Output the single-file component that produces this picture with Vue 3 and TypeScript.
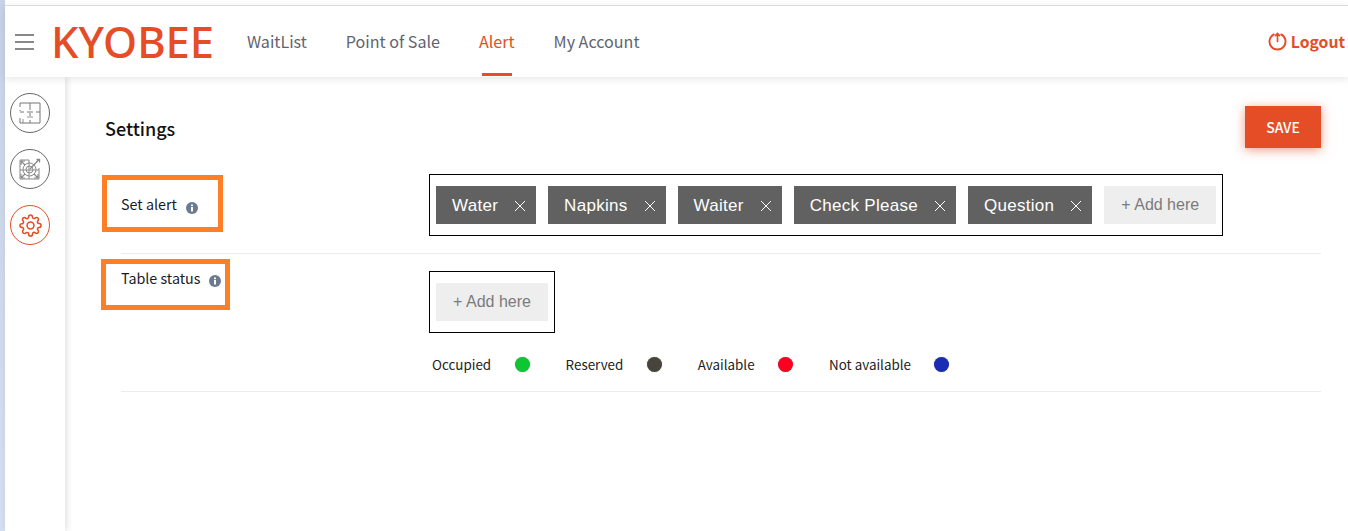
<script setup lang="ts">
const navItems = [
  { label: 'WaitList', active: false },
  { label: 'Point of Sale', active: false },
  { label: 'Alert', active: true },
  { label: 'My Account', active: false },
]
const alerts = ['Water', 'Napkins', 'Waiter', 'Check Please', 'Question']
const legend = [
  { label: 'Occupied', color: '#0cc733' },
  { label: 'Reserved', color: '#45453b' },
  { label: 'Available', color: '#fa0021' },
  { label: 'Not available', color: '#1a2cb4' },
]
</script>

<template>
  <div class="page">
    <div class="stripe"></div>
    <div class="main">
      <header class="header">
        <button class="burger" aria-label="Menu"><i></i><i></i><i></i></button>
        <div class="logo">KYOBEE</div>
        <nav class="nav">
          <a v-for="item in navItems" :key="item.label" :class="{ active: item.active }">{{ item.label }}</a>
        </nav>
        <a class="logout">
          <svg width="19" height="19" viewBox="0 0 19 19" fill="none" stroke="#e44d26" stroke-width="1.9" stroke-linecap="round">
            <path d="M5.800 2.400a8 8 0 1 0 7.400 0" />
            <path d="M9.500 9.500V1.500M7.500 3.600l2-2.200 2 2.200" stroke-width="1.700" />
          </svg>
          Logout
        </a>
      </header>
      <div class="body">
        <aside class="sidebar">
          <div class="round">
            <svg width="22" height="22" viewBox="0 0 22 22" fill="none" stroke="#777" stroke-width="1">
              <path d="M1 5V1h20v20H1v-5M1 9V8M11 1v7M11 11v3M11 18v3M1 10h4M8 10h6M17 10h4" />
              <path d="M4 21V17M8 15h6" stroke-width=".8" />
            </svg>
          </div>
          <div class="round">
            <svg width="24" height="24" viewBox="0 0 24 24" fill="none" stroke="#8a8a8a" stroke-width="1">
              <path d="M2 3h9M2 3v19h19V11" />
              <path d="M2 13h19M11 3v19" />
              <circle cx="11.500" cy="12.500" r="6.500" />
              <circle cx="11.500" cy="12.500" r="3.500" />
              <path d="M12 12L21 2.500M18.500 2.500h3v3" stroke-width="1.300" />
              <path d="M3 4l4 4M3 8V4h4M3 21l4-4M3 17v4h4M20 21l-4-4M20 17v4h-4" stroke-width="1.200" />
            </svg>
          </div>
          <div class="round on">
            <svg width="23" height="23" viewBox="0 0 24 24" fill="none" stroke="#e44d26" stroke-width="1.600" stroke-linejoin="round">
              <circle cx="12" cy="12" r="3.600" />
              <path d="M19.400 15a1.650 1.650 0 0 0 .33 1.820l.06.06a2 2 0 0 1 0 2.830 2 2 0 0 1-2.830 0l-.06-.06a1.650 1.650 0 0 0-1.820-.33 1.650 1.650 0 0 0-1 1.510V21a2 2 0 0 1-2 2 2 2 0 0 1-2-2v-.09A1.650 1.650 0 0 0 9 19.400a1.650 1.650 0 0 0-1.820.33l-.06.06a2 2 0 0 1-2.830 0 2 2 0 0 1 0-2.830l.06-.06a1.650 1.650 0 0 0 .33-1.820 1.650 1.650 0 0 0-1.510-1H3a2 2 0 0 1-2-2 2 2 0 0 1 2-2h.09A1.650 1.650 0 0 0 4.600 9a1.650 1.650 0 0 0-.33-1.820l-.06-.06a2 2 0 0 1 0-2.830 2 2 0 0 1 2.830 0l.06.06a1.650 1.650 0 0 0 1.820.33H9a1.650 1.650 0 0 0 1-1.510V3a2 2 0 0 1 2-2 2 2 0 0 1 2 2v.09a1.650 1.650 0 0 0 1 1.510 1.650 1.650 0 0 0 1.820-.33l.06-.06a2 2 0 0 1 2.830 0 2 2 0 0 1 0 2.830l-.06.06a1.650 1.650 0 0 0-.33 1.820V9a1.650 1.650 0 0 0 1.510 1H21a2 2 0 0 1 2 2 2 2 0 0 1-2 2h-.09a1.650 1.650 0 0 0-1.510 1z" />
            </svg>
          </div>
        </aside>
        <main class="content">
          <div class="title-row">
            <h1>Settings</h1>
            <button class="save">SAVE</button>
          </div>

          <section class="row first">
            <div class="label">
              <span>Set alert</span>
              <svg class="info" width="12" height="12" viewBox="0 0 12 12"><circle cx="6" cy="6" r="6" fill="#6b7a90" /><rect x="5" y="5" width="2" height="4.500" fill="#fff" /><rect x="5" y="2.500" width="2" height="1.700" fill="#fff" /></svg>
              <b class="mark"></b>
            </div>
            <div class="box">
              <span v-for="a in alerts" :key="a" class="tag">
                {{ a }}
                <svg width="12" height="12" viewBox="0 0 12 12" stroke="#fff" stroke-width="1"><path d="M1 1l10 10M11 1L1 11" /></svg>
              </span>
              <span class="add">+ Add here</span>
            </div>
          </section>

          <section class="row second">
            <div class="label">
              <span>Table status</span>
              <svg class="info" width="12" height="12" viewBox="0 0 12 12"><circle cx="6" cy="6" r="6" fill="#6b7a90" /><rect x="5" y="5" width="2" height="4.500" fill="#fff" /><rect x="5" y="2.500" width="2" height="1.700" fill="#fff" /></svg>
              <b class="mark"></b>
            </div>
            <div class="value">
              <div class="box">
                <span class="add">+ Add here</span>
              </div>
              <div class="legend">
                <div v-for="l in legend" :key="l.label" class="legend-item">
                  <span>{{ l.label }}</span>
                  <i class="dot" :style="{ background: l.color }"></i>
                </div>
              </div>
            </div>
          </section>
        </main>
      </div>
    </div>
  </div>
</template>

<style>
html, body { margin: 0; background: #fff; }
</style>

<style scoped>
.page {
  display: flex;
  height: 531px;
  overflow: hidden;
  font-family: "Noto Sans CJK KR", "Noto Sans", sans-serif;
  color: #1a1a2a;
}
.stripe {
  width: 5px;
  flex: none;
  background: linear-gradient(180deg, #c6d2e6, #d3deee);
}
.main {
  flex: 1;
  min-width: 0;
  display: flex;
  flex-direction: column;
  padding-top: 5px;
}
.header {
  height: 70px;
  box-sizing: content-box;
  border-top: 1px solid #dcdcdc;
  display: flex;
  align-items: center;
  padding: 0 3px 1px 0;
  box-shadow: 0 2px 8px rgba(0, 0, 0, 0.1);
  position: relative;
  z-index: 2;
  background: #fff;
}
.burger {
  all: unset;
  margin: 2px 0 0 10px;
  width: 19px;
  display: flex;
  flex-direction: column;
  gap: 5px;
}
.burger i {
  display: block;
  height: 2px;
  background: #888;
}
.logo {
  margin-left: 17px;
  font-family: "Noto Sans", sans-serif;
  font-size: 43.5px;
  font-weight: 500;
  line-height: 70px;
  color: #e44d26;
  width: 196px;
}
.nav {
  display: flex;
  gap: 39px;
  align-self: stretch;
}
.nav a {
  position: relative;
  font-size: 16.1px;
  color: #5f6470;
  line-height: 70px;
}
.nav a.active {
  color: #e44d26;
}
.nav a.active::after {
  content: "";
  position: absolute;
  left: 3px;
  right: 3px;
  bottom: 0;
  height: 3px;
  background: #e44d26;
}
.logout {
  margin-left: auto;
  display: flex;
  align-items: center;
  gap: 4px;
  font-size: 15.7px;
  font-weight: 700;
  color: #e44d26;
}
.body {
  flex: 1;
  display: flex;
  min-height: 0;
}
.sidebar {
  width: 60px;
  flex: none;
  box-sizing: border-box;
  padding: 16px 0 0 5px;
  display: flex;
  flex-direction: column;
  gap: 16px;
  box-shadow: 2px 0 6px rgba(0, 0, 0, 0.12);
  background: #fff;
}
.round {
  width: 40px;
  height: 40px;
  box-sizing: border-box;
  border: 1px solid #666;
  border-radius: 50%;
  display: flex;
  align-items: center;
  justify-content: center;
}
.round.on {
  border-color: #e44d26;
}
.content {
  flex: 1;
  min-width: 0;
  padding: 29px 27px 0 40px;
}
.title-row {
  display: flex;
  justify-content: space-between;
  align-items: center;
  height: 42px;
  margin-bottom: 26px;
}
h1 {
  margin: 0;
  padding-top: 2px;
  font-size: 18px;
  font-weight: 500;
  color: #111;
}
.save {
  all: unset;
  width: 76px;
  height: 42px;
  text-align: center;
  line-height: 42px;
  font-size: 14px;
  font-weight: 500;
  color: #fff;
  background: #e44d26;
  box-shadow: 0 2px 10px rgba(228, 77, 38, 0.55);
}
.row {
  margin-left: 16px;
  display: flex;
  border-bottom: 1px solid #ececec;
}
.row.first {
  padding-bottom: 17px;
}
.row.second {
  padding: 17px 0 17px;
}
.label {
  position: relative;
  width: 308px;
  flex: none;
  display: flex;
  align-items: center;
  height: 20px;
  font-size: 14.3px;
}
.first .label {
  margin-top: 19px;
}
.second .label {
  margin-top: -4px;
}
.info {
  margin-left: 9px;
  margin-top: 9px;
}
.second .info {
  margin-left: 8px;
  margin-top: 7px;
}
.mark {
  position: absolute;
  box-sizing: border-box;
  border: 5px solid #ff7f27;
  pointer-events: none;
}
.first .mark {
  left: -19px;
  top: -18px;
  width: 121px;
  height: 57px;
}
.second .mark {
  left: -20px;
  top: -8px;
  width: 129px;
  height: 51px;
}
.box {
  display: inline-flex;
  align-self: flex-start;
  gap: 12px;
  padding: 11px 6px;
  border: 1px solid #000;
  font-family: "Liberation Sans", Arial, sans-serif;
  font-size: 16px;
}
.tag {
  height: 38px;
  box-sizing: border-box;
  display: inline-flex;
  align-items: center;
  gap: 16px;
  padding: 2px 10px 0 16px;
  background: #616161;
  color: #fff;
  font-size: 17px;
  letter-spacing: 0.28px;
}
.add {
  width: 112px;
  height: 38px;
  display: inline-flex;
  align-items: center;
  justify-content: center;
  background: #eeeeee;
  color: #7b7b7b;
}
.value {
  display: flex;
  flex-direction: column;
}
.legend {
  display: flex;
  gap: 36px;
  margin-top: 21px;
  padding-left: 3px;
  font-size: 13.4px;
  line-height: 20px;
  color: #222;
}
.legend-item {
  display: flex;
  align-items: center;
  gap: 23.5px;
}
.dot {
  display: block;
  width: 15px;
  height: 15px;
  border-radius: 50%;
  box-shadow: 0 0 1px rgba(0, 0, 0, 0.4);
}
</style>
